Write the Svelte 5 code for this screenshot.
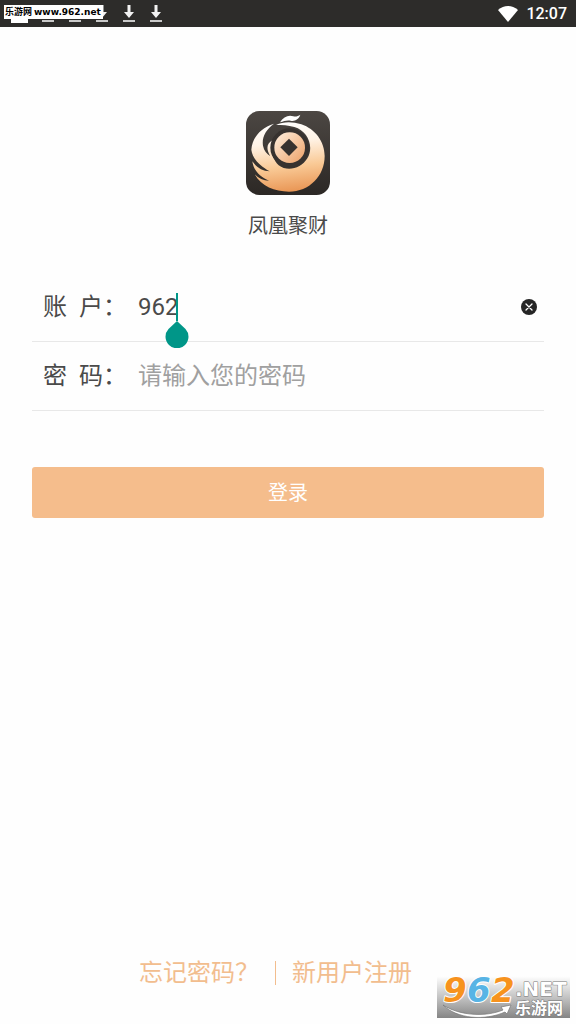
<script>
  let account = $state('962');
  let password = $state('');
  const downloads = [0, 1, 2, 3, 4];
</script>

<div class="page">
  <header class="status">
    <div class="notifications">
      <span class="notice"></span>
      {#each downloads as item (item)}
        <svg class="download" viewBox="0 0 14 18" aria-hidden="true">
          <path d="M5.500 0h3v7H12l-5 6-5-6h3.500z" fill="#f2f2f2" />
          <path d="M1 15h12v2H1z" fill="#c9c9c9" />
        </svg>
      {/each}
    </div>
    <span class="site-tag"><span class="site-name">乐游网</span>www.962.net</span>
    <svg class="wifi" viewBox="0 0 20 16" aria-hidden="true">
      <path d="M0 4C6-1.300 14-1.300 20 4L10 16z" fill="#fff" />
    </svg>
    <time>12:07</time>
  </header>

  <main>
    <svg class="logo" viewBox="0 0 252 252" role="img" aria-label="凤凰聚财">
      <defs>
        <linearGradient id="tile" x1="0" y1="0" x2="0" y2="1">
          <stop offset="0" stop-color="#4c4743" />
          <stop offset="1" stop-color="#2c2825" />
        </linearGradient>
        <linearGradient id="plume" gradientUnits="userSpaceOnUse" x1="110" y1="30" x2="135" y2="242">
          <stop offset="0" stop-color="#fff" />
          <stop offset=".3" stop-color="#fff3e6" />
          <stop offset=".65" stop-color="#f9c995" />
          <stop offset="1" stop-color="#e99655" />
        </linearGradient>
        <linearGradient id="coin" x1="0" y1="0" x2="1" y2="1">
          <stop offset="0" stop-color="#fff0df" />
          <stop offset="1" stop-color="#eda066" />
        </linearGradient>
      </defs>
      <rect width="252" height="252" rx="40" fill="url(#tile)" />
      <path d="M102 34C112 17 128 11 142 16C150 18 157 15 163 11C158 25 146 32 134 29C123 27 114 30 102 34Z" fill="#fff" />
      <path d="M90 42C112 31 139 31 166 40C207 54 236 91 236 135C236 195 190 242 129 242C86 242 46 226 26 190C38 202 52 209 69 209C43 198 23 180 19 151C32 170 49 180 71 181C42 164 20 145 16 116C19 80 43 51 84 38C59 56 47 80 51 104C54 119 62 128 73 136C60 114 61 98 80 87C72 114 78 143 98 163C125 184 166 172 184 142C205 107 186 60 145 48C126 42 109 43 90 42Z" fill="url(#plume)" />
      <circle cx="131" cy="110" r="58" fill="#37322f" />
      <circle cx="131" cy="110" r="46" fill="url(#coin)" />
      <path d="M129 83L155 109L129 135L103 109Z" fill="#37322f" />
    </svg>
    <h1>凤凰聚财</h1>

    <form onsubmit={(event) => event.preventDefault()}>
      <div class="field">
        <label for="account"><span>账</span><span>户：</span></label>
        <div class="entry">
          <input id="account" type="text" autocomplete="off" bind:value={account} />
          <span class="caret"></span>
          <svg class="handle" viewBox="0 0 24 27" aria-hidden="true">
            <path d="M12 0L20.500 8A11.500 11.500 0 1 1 3.500 8Z" fill="#009688" />
          </svg>
        </div>
        <button class="clear" type="button" aria-label="清除" onclick={() => (account = '')}>
          <svg viewBox="0 0 16 16" aria-hidden="true">
            <circle cx="8" cy="8" r="8" fill="#252525" />
            <path d="M5 5l6 6M11 5l-6 6" stroke="#fff" stroke-width="1.300" stroke-linecap="round" />
          </svg>
        </button>
      </div>
      <div class="field">
        <label for="password"><span>密</span><span>码：</span></label>
        <div class="entry">
          <input id="password" type="password" placeholder="请输入您的密码" bind:value={password} />
        </div>
      </div>
      <button class="login" type="submit">登录</button>
    </form>
  </main>

  <footer>
    <a href="#forgot">忘记密码？</a>
    <span class="divider"></span>
    <a href="#register">新用户注册</a>
  </footer>

  <div class="watermark">
    <svg viewBox="0 0 133 42" role="img" aria-label="962.NET 乐游网">
      <defs>
        <linearGradient id="shade" x1="0" y1="0" x2="0" y2="1">
          <stop offset="0" stop-color="#fff" />
          <stop offset=".5" stop-color="#c4c4c4" />
          <stop offset="1" stop-color="#858585" />
        </linearGradient>
      </defs>
      <rect width="133" height="42" fill="url(#shade)" />
      <path d="M6 29C23 40 49 41 66 34L64 31L74 29L70 38L68 36C48 45 20 43 6 29Z" fill="#fff" stroke="#777" stroke-width=".7" />
      <g class="digits">
        <text x="6" y="26" fill="#f7931e">9</text>
        <text x="30" y="26" fill="#58b4e5">6</text>
        <text x="54" y="26" fill="#f7931e">2</text>
      </g>
      <text class="net" x="78" y="20">.NET</text>
      <text class="cn" x="78" y="38">乐游网</text>
    </svg>
  </div>
</div>

<style>
  :global(body) {
    margin: 0;
    background: #fefefe;
  }

  .page {
    position: relative;
    display: flex;
    flex-direction: column;
    min-height: 100vh;
    box-sizing: border-box;
    font-family: Roboto, "Noto Sans CJK SC", sans-serif;
    color: #4a4a4a;
  }

  .status {
    position: relative;
    display: flex;
    align-items: center;
    height: 27px;
    padding: 0 9px 0 11px;
    background: #2d2c2a;
    color: #fff;
  }

  .notifications {
    display: flex;
    align-items: center;
    gap: 13px;
    margin-right: auto;
  }

  .notice {
    width: 17px;
    height: 18px;
    background: #fff;
  }

  .download {
    width: 14px;
    height: 18px;
  }

  .site-tag {
    position: absolute;
    top: 5px;
    left: 4px;
    display: flex;
    align-items: center;
    gap: 2px;
    width: 99px;
    height: 14px;
    padding-left: 1px;
    box-sizing: border-box;
    background: #fff;
    color: #000;
    font: bold 9px/14px "DejaVu Sans", sans-serif;
    white-space: nowrap;
  }

  .site-name {
    font: bold 9px/14px "Noto Sans CJK SC", sans-serif;
  }

  .wifi {
    width: 20px;
    height: 16px;
    margin-right: 8px;
  }

  time {
    font-size: 16px;
    font-weight: 500;
  }

  main {
    display: flex;
    flex-direction: column;
    align-items: center;
    padding: 84px 32px 0;
  }

  .logo {
    width: 84px;
    height: 84px;
  }

  h1 {
    margin: 17px 0 33px;
    font-size: 20px;
    font-weight: 400;
    line-height: 28px;
  }

  form {
    width: 100%;
  }

  .field {
    display: flex;
    align-items: center;
    height: 68px;
    padding: 0 7px 0 11px;
    border-bottom: 1px solid #e8e8e8;
    font-size: 24px;
  }

  label {
    display: flex;
    gap: 12px;
    width: 95px;
    line-height: 32px;
    white-space: nowrap;
  }

  .entry {
    position: relative;
    flex: 1;
    min-width: 0;
  }

  input {
    display: block;
    width: 100%;
    height: 36px;
    padding: 0;
    border: 0;
    outline: 0;
    background: none;
    color: inherit;
    font: inherit;
  }

  input::placeholder {
    color: #a0a0a0;
    opacity: 1;
  }

  .caret {
    position: absolute;
    top: 4px;
    left: 38px;
    width: 2px;
    height: 28px;
    background: #009688;
  }

  .handle {
    position: absolute;
    top: 32px;
    left: 27px;
    width: 24px;
    height: 27px;
  }

  button {
    padding: 0;
    border: 0;
    cursor: pointer;
  }

  .clear {
    width: 16px;
    height: 16px;
    background: none;
  }

  .clear svg {
    display: block;
  }

  .login {
    width: 100%;
    height: 51px;
    margin-top: 56px;
    border-radius: 3px;
    background: #f5bd8c;
    color: #fff;
    font: 20px/28px Roboto, "Noto Sans CJK SC", sans-serif;
  }

  footer {
    display: flex;
    align-items: center;
    justify-content: center;
    gap: 16px;
    margin-top: auto;
    padding: 0 25px 33px 0;
    font-size: 24px;
    line-height: 36px;
  }

  a {
    color: #f2bd8e;
    text-decoration: none;
  }

  .divider {
    width: 1px;
    height: 24px;
    background: #f2bd8e;
  }

  .watermark {
    position: absolute;
    right: 6px;
    bottom: 6px;
    width: 133px;
    height: 42px;
  }

  .watermark svg {
    display: block;
    overflow: visible;
  }

  .watermark text {
    paint-order: stroke;
    stroke-linejoin: round;
  }

  .digits {
    font: italic bold 34px "DejaVu Sans", sans-serif;
    stroke: #fff;
    stroke-width: 2px;
  }

  .net {
    font: bold 20px "DejaVu Sans", sans-serif;
    fill: #fff;
    stroke: #777;
    stroke-width: 1px;
  }

  .cn {
    font: bold 16px "Noto Sans CJK SC", sans-serif;
    fill: #fff;
    stroke: #777;
    stroke-width: 1px;
  }
</style>
